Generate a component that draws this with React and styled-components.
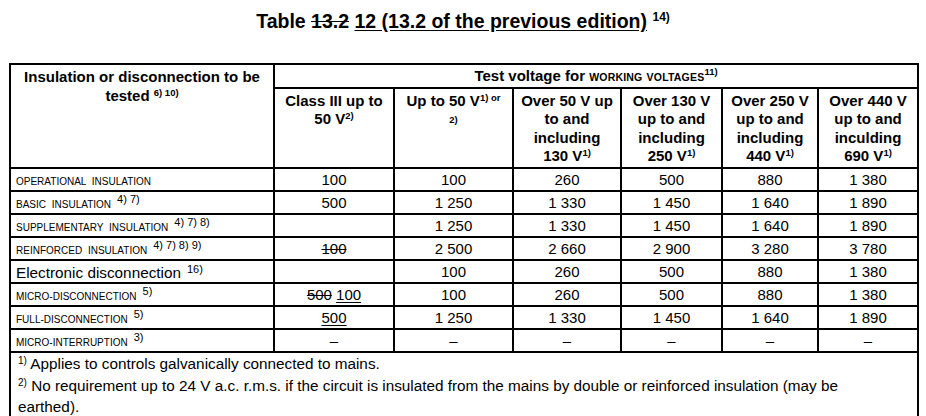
import React from "react";
import styled, { createGlobalStyle } from "styled-components";

const GlobalStyle = createGlobalStyle`
  html, body {
    margin: 0;
    padding: 0;
    background: #fff;
  }
  body {
    font-family: "Liberation Sans", Arial, sans-serif;
    color: #000;
  }
`;

const Page = styled.div`
  width: 926px;
  height: 416px;
  overflow: hidden;
  padding-top: 10px;
  box-sizing: border-box;
`;

const Title = styled.h1`
  margin: 0 0 30px 0;
  text-align: center;
  font-size: 19.5px;
  line-height: 23px;
  font-weight: bold;
`;

const Struck = styled.span`
  text-decoration: line-through;
`;

const Under = styled.span`
  text-decoration: underline;
  text-underline-offset: 2px;
`;

const Sup = styled.sup`
  font-size: ${(p) => p.$size || 10}px;
  font-weight: ${(p) => (p.$bold ? "bold" : "normal")};
  vertical-align: ${(p) => p.$raise || 5}px;
  line-height: 0;
  margin-left: ${(p) => p.$gap || 0}px;
`;

const Table = styled.table`
  margin-left: 9px;
  width: 908px;
  table-layout: fixed;
  border-collapse: collapse;
  border: 2px solid #000;
`;

const HeadCell = styled.th`
  border: 2px solid #000;
  padding: ${(p) => p.$pad || "3px 2px 0"};
  font-size: 15px;
  line-height: 18.5px;
  font-weight: bold;
  text-align: center;
  vertical-align: top;
`;

const Caps = styled.span`
  text-transform: uppercase;
  font-size: ${(p) => p.$size || 10}px;
  letter-spacing: ${(p) => p.$spacing || 0}px;
  word-spacing: ${(p) => p.$words || 3}px;
`;

const Plain = styled.span`
  font-size: 15.3px;
  line-height: 17px;
`;

const Row = styled.tr`
  height: ${(p) => p.$h || 23}px;
`;

const LabelCell = styled.td`
  border: 2px solid #000;
  padding: 2px 0 0 5px;
  font-size: 15px;
  line-height: 17px;
  vertical-align: middle;
  white-space: nowrap;
`;

const ValueCell = styled.td`
  border: 2px solid #000;
  padding: 0;
  font-size: 15px;
  line-height: 17px;
  text-align: center;
  vertical-align: middle;
`;

const NoteCell = styled.td`
  border: 2px solid #000;
  border-bottom: none;
  padding: 0 6px 0 7px;
  font-size: 15.3px;
  line-height: 21px;
`;

const Note = styled.p`
  margin: ${(p) => (p.$first ? "0" : "1px 0 0")};
`;

const widths = [264, 120, 119, 108, 101, 96, 100];

const rows = [
  { label: <Caps>Operational insulation</Caps>, values: ["100", "100", "260", "500", "880", "1 380"] },
  { label: <Caps>Basic insulation</Caps>, notes: "4) 7)", values: ["500", "1 250", "1 330", "1 450", "1 640", "1 890"] },
  { label: <Caps>Supplementary insulation</Caps>, notes: "4) 7) 8)", values: ["", "1 250", "1 330", "1 450", "1 640", "1 890"] },
  {
    label: <Caps>Reinforced insulation</Caps>,
    notes: "4) 7) 8) 9)",
    values: [<Struck key="s">100</Struck>, "2 500", "2 660", "2 900", "3 280", "3 780"],
  },
  { label: <Plain>Electronic disconnection</Plain>, notes: "16)", values: ["", "100", "260", "500", "880", "1 380"] },
  {
    label: <Caps>Micro-disconnection</Caps>,
    notes: "5)",
    values: [
      <span key="m">
        <Struck>500</Struck> <Under>100</Under>
      </span>,
      "100",
      "260",
      "500",
      "880",
      "1 380",
    ],
  },
  {
    label: <Caps>Full-disconnection</Caps>,
    notes: "5)",
    values: [<Under key="u">500</Under>, "1 250", "1 330", "1 450", "1 640", "1 890"],
  },
  { label: <Caps>Micro-interruption</Caps>, notes: "3)", values: ["–", "–", "–", "–", "–", "–"] },
];

const rangeHeads = [
  ["Over 50 V up", "to and", "including", "130 V"],
  ["Over 130 V", "up to and", "including", "250 V"],
  ["Over 250 V", "up to and", "including", "440 V"],
  ["Over 440 V", "up to and", "inculding", "690 V"],
];

export default function App() {
  return (
    <Page>
      <GlobalStyle />
      <Title>
        Table <Struck>13.2</Struck> <Under>12 (13.2 of the previous edition)</Under>{" "}
        <Sup $size={12} $bold $raise={7}>14)</Sup>
      </Title>
      <Table>
        <colgroup>
          {widths.map((w, i) => (
            <col key={i} style={{ width: w }} />
          ))}
        </colgroup>
        <tbody>
          <Row $h={23}>
            <HeadCell rowSpan={2} $pad="3px 4px 0">
              Insulation or disconnection to be
              <br />
              tested <Sup $size={9.5} $bold>6) 10)</Sup>
            </HeadCell>
            <HeadCell colSpan={6} $pad="2px 2px 0">
              Test voltage for <Caps $size={10.5} $spacing={0.2} $words={1}>working voltages</Caps>
              <Sup $size={9.5} $bold $raise={6}>11)</Sup>
            </HeadCell>
          </Row>
          <Row $h={80}>
            <HeadCell>
              Class III up to
              <br />
              50 V<Sup $size={9.5} $bold>2)</Sup>
            </HeadCell>
            <HeadCell>
              Up to 50 V<Sup $size={9.5} $bold>1) or</Sup>
              <br />
              <Sup $size={9.5} $bold $raise={1}>2)</Sup>
            </HeadCell>
            {rangeHeads.map((lines, i) => (
              <HeadCell key={i}>
                {lines[0]}
                <br />
                {lines[1]}
                <br />
                {lines[2]}
                <br />
                {lines[3]}
                <Sup $size={9.5} $bold>1)</Sup>
              </HeadCell>
            ))}
          </Row>
          {rows.map((r, i) => (
            <Row key={i}>
              <LabelCell>
                {r.label}
                {r.notes && (
                  <Sup $size={11} $raise={5} $gap={6}>
                    {r.notes}
                  </Sup>
                )}
              </LabelCell>
              {r.values.map((v, j) => (
                <ValueCell key={j}>{v}</ValueCell>
              ))}
            </Row>
          ))}
          <tr>
            <NoteCell colSpan={7}>
              <Note $first>
                <Sup $size={10} $raise={5}>1)</Sup> Applies to controls galvanically connected to mains.
              </Note>
              <Note>
                <Sup $size={10} $raise={5}>2)</Sup> No requirement up to 24 V a.c. r.m.s. if the circuit is insulated
                from the mains by double or reinforced insulation (may be
                <br />
                earthed).
              </Note>
              <Note>&nbsp;</Note>
            </NoteCell>
          </tr>
        </tbody>
      </Table>
    </Page>
  );
}
